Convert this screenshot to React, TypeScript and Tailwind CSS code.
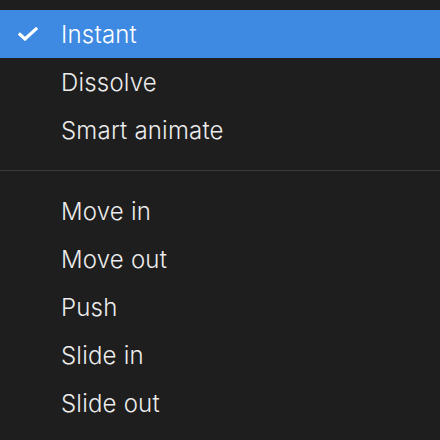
import React from 'react';

const groups: string[][] = [
  ['Instant', 'Dissolve', 'Smart animate'],
  ['Move in', 'Move out', 'Push', 'Slide in', 'Slide out'],
];

function CheckIcon() {
  return (
    <svg width="20" height="14" viewBox="0 0 20 14" className="shrink-0">
      <path d="M2 7.5 L7 12 L18 2" fill="none" stroke="#fff" strokeWidth="3.2" strokeLinecap="square" />
    </svg>
  );
}

export default function App() {
  const selected = 'Instant';
  return (
    <div className="w-[440px] h-[440px] bg-[#1e1e1e] pt-[10px] overflow-hidden" style={{ fontFamily: 'Inter, "Noto Sans", sans-serif' }}>
      {groups.map((items, gi) => (
        <div key={gi}>
          {gi > 0 && <div className="my-4 h-px bg-[#3a3a3a]" />}
          {items.map((label) => {
            const active = label === selected;
            return (
              <div
                key={label}
                className={`h-12 flex items-center text-[24px] font-light tracking-[0.2px] ${active ? 'bg-[#3e8ae2] text-white' : 'text-[#ececec]'}`}
              >
                <div className="w-[61px] pl-[18px] flex items-center">{active && <CheckIcon />}</div>
                <span className="pt-px">{label}</span>
              </div>
            );
          })}
        </div>
      ))}
    </div>
  );
}
